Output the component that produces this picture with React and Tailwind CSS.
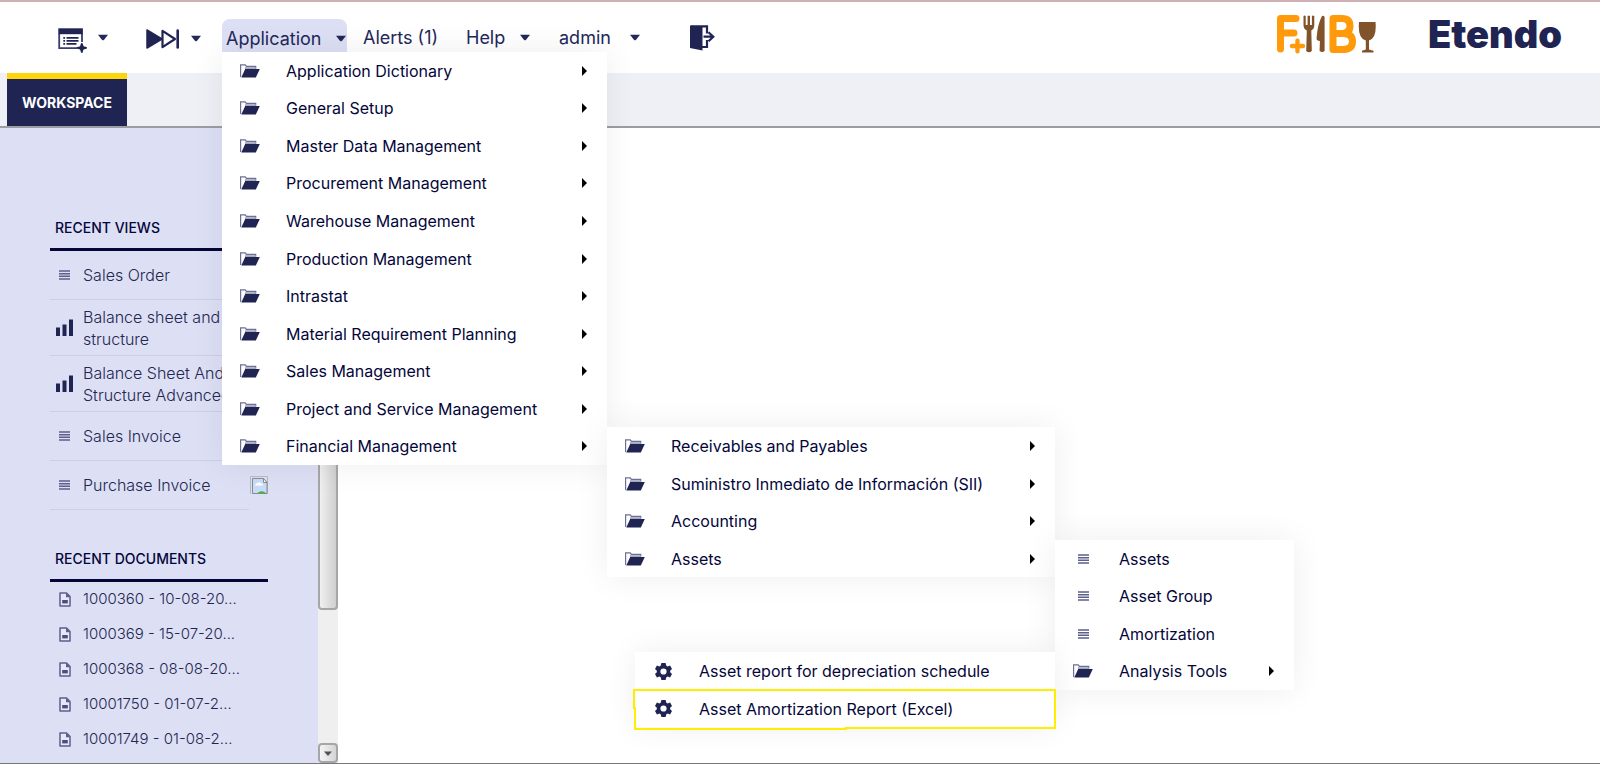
const Caret = ({ className = "" }) => (
  <svg className={className} width="12" height="8" viewBox="0 0 12 8" aria-hidden="true">
    <path d="M1 .8h10L7.3 5.6Q6 7.2 4.7 5.6z" fill="#23285a" />
  </svg>
);

const NewIcon = () => (
  <svg width="29" height="25" viewBox="0 0 29 25" aria-hidden="true">
    <path d="M1.200 6v14.200h18M24 5v9" fill="none" stroke="#3a3e6b" strokeWidth="1.800" />
    <path d="M.3.300h24.600v5.900H.3z" fill="#202452" />
    <path d="M5.300 9.800h1.800M5.300 12.800h1.800M5.300 15.800h1.800M8.500 9.800h12M8.500 12.800h12M8.500 15.800h10" stroke="#202452" strokeWidth="1.800" />
    <path d="M23.800 15.800q.7 2.700 1.300 3.100.6.400 3 .9-2.400.6-3 1-.6.500-1.300 3.200-.7-2.700-1.200-3.200-.6-.4-3.100-1 2.500-.5 3.100-.9.500-.4 1.200-3.100z" fill="#202452" stroke="#202452" strokeWidth="1.800" strokeLinejoin="round" />
  </svg>
);

const ForwardIcon = () => (
  <svg width="34" height="20" viewBox="0 0 34 20" aria-hidden="true">
    <path d="M1 1v18l15-9z" fill="#202452" stroke="#202452" strokeWidth="1.500" strokeLinejoin="round" />
    <path d="M16.500 1.800v16.400L29 10z" fill="none" stroke="#202452" strokeWidth="2.200" strokeLinejoin="round" />
    <path d="M31.700 1.500v17" stroke="#202452" strokeWidth="2.600" strokeLinecap="round" />
  </svg>
);

const ExitIcon = () => (
  <svg width="25" height="26" viewBox="0 0 25 26" aria-hidden="true">
    <path d="M0 .500L12.500 2v23.600L0 23z" fill="#202452" />
    <path d="M1 1.400h16v7M12 22h5v-7" fill="none" stroke="#202452" strokeWidth="2.200" />
    <path d="M13.500 11.700h9M18.500 7.200l4.800 4.500-4.800 4.600" fill="none" stroke="#202452" strokeWidth="2.200" />
  </svg>
);

const FolderIcon = () => (
  <svg width="20" height="14" viewBox="0 0 20 14" aria-hidden="true">
    <path d="M.6 13V.8h4.600l1.200 1.600h9.300v2.400" fill="#fff" stroke="#6d7093" strokeWidth="1.200" />
    <path d="M5 3.200h10.500V6H5z" fill="#a4a6c0" />
    <path d="M5.200 5h14.600l-4 8.600H1.300z" fill="#202452" />
  </svg>
);

const LinesIcon = () => (
  <svg width="11" height="10" viewBox="0 0 11 10" aria-hidden="true">
    <path d="M0 1h11M0 3.700h11M0 6.300h11M0 9h11" stroke="#5c5f8b" strokeWidth="1.600" />
  </svg>
);

const ChartIcon = () => (
  <svg width="17" height="17" viewBox="0 0 17 17" aria-hidden="true">
    <path d="M0 8.500h4V17H0zM6.500 5.500h4V17h-4zM13 .5h4V17h-4z" fill="#202452" />
  </svg>
);

const DocIcon = () => (
  <svg width="12" height="15" viewBox="0 0 12 15" aria-hidden="true">
    <path d="M1 1h6.500L11 4.600V14H1z" fill="#e6e7f8" stroke="#5c5f8b" strokeWidth="1.500" strokeLinejoin="round" />
    <path d="M7 .8v4.400h4.300z" fill="#5c5f8b" />
    <path d="M3.200 8h5.600v3.400H3.200z" fill="#4a4e7d" />
  </svg>
);

const GearIcon = () => (
  <svg width="17" height="17" viewBox="0 0 24 24" aria-hidden="true">
    <path
      fill="#202452"
      fillRule="evenodd"
      d="M9 0h6l.8 3.700 1.900 1.100 3.600-1.200 2.700 5-2.600 2.500v1.800l2.600 2.500-2.700 5-3.600-1.200-1.900 1.100L15 24H9l-.8-3.700-1.900-1.100-3.600 1.200-2.700-5 2.600-2.500v-1.800L0 8.600l2.700-5 3.600 1.200 1.900-1.100zM12 7.600a4.400 4.400 0 1 0 0 8.800 4.400 4.400 0 0 0 0-8.800z"
    />
  </svg>
);

const BrokenImage = () => (
  <svg className="shrink-0" width="18" height="18" viewBox="0 0 18 18" role="img" aria-label="Image not available">
    <path d="M.5 18V.5h17V18" fill="none" stroke="#b9b9c4" />
    <path d="M2.500 17.500v-15h11l3.500 4v11z" fill="#c6dcf8" stroke="#8a8a90" />
    <path d="M5 9.500q0-2.500 2.500-2.300 1.500-2 3.200 0 2.300 0 2.300 2.300z" fill="#fff" />
    <path d="M13.500 2.500v4H17z" fill="#fff" stroke="#8a8a90" />
    <path d="M7 17.500q4.500-4.500 9.500 0z" fill="#4fae33" />
  </svg>
);

const FoodLogo = () => (
  <svg width="100" height="40" viewBox="0 0 100 40" role="img" aria-label="F&B">
    <g fill="none" stroke="#ff9a0a" strokeWidth="7" strokeLinecap="round" strokeLinejoin="round">
      <path d="M20 4.500H4.500V35M5 19h13" />
      <path d="M57 4.500v31h11q8.500-.5 8.500-8 0-7.500-8.500-8H57h9q8-.5 8-7.500 0-7.500-8-7.500z" />
    </g>
    <path d="M14 32h14M21.500 25v14" stroke="#fff" strokeWidth="8" />
    <path d="M16 32h11M21.500 26.800v10.400" stroke="#ff9a0a" strokeWidth="4.400" strokeLinecap="round" />
    <g fill="#80532b">
      <path d="M27.500 2q1.400-1.200 2.200 0v9h1.900V2q1.200-1.200 2.400 0v9h1.900V2q1-1.200 2.400 0v9q0 4-3 5.500l.5 20.500q-2.800 2.500-5.600 0l.6-20.500q-3.300-1.500-3.300-5.500z" />
      <path d="M46 2q2.600-.8 2.600 1.500V37q-2.400 2-5 0l.3-10q-3.800-.5-3.300-3 1-14 5.400-22z" />
      <path d="M83 8h16.500q1.500 16.500-6.500 18.500v9l4.500 1.300v1.700H86v-1.700l3.800-1.300v-9Q81.500 24.500 83 8z" />
    </g>
  </svg>
);

const icons = { folder: FolderIcon, lines: LinesIcon, gear: GearIcon };

const reports = [
  { label: "Asset report for depreciation schedule", icon: "gear" },
  { label: "Asset Amortization Report (Excel)", icon: "gear", marked: true },
];

const assets = [
  { label: "Assets", icon: "lines" },
  { label: "Asset Group", icon: "lines" },
  { label: "Amortization", icon: "lines" },
  { label: "Analysis Tools", icon: "folder", items: reports, place: "right-full top-0 w-[420px] h-[75px]" },
];

const financial = [
  { label: "Receivables and Payables", icon: "folder", arrow: true },
  { label: "Suministro Inmediato de Información (SII)", icon: "folder", arrow: true },
  { label: "Accounting", icon: "folder", arrow: true },
  { label: "Assets", icon: "folder", items: assets, place: "left-full top-0 w-[239px] h-[150px]" },
];

const application = [
  { label: "Application Dictionary", icon: "folder", arrow: true },
  { label: "General Setup", icon: "folder", arrow: true },
  { label: "Master Data Management", icon: "folder", arrow: true },
  { label: "Procurement Management", icon: "folder", arrow: true },
  { label: "Warehouse Management", icon: "folder", arrow: true },
  { label: "Production Management", icon: "folder", arrow: true },
  { label: "Intrastat", icon: "folder", arrow: true },
  { label: "Material Requirement Planning", icon: "folder", arrow: true },
  { label: "Sales Management", icon: "folder", arrow: true },
  { label: "Project and Service Management", icon: "folder", arrow: true },
  { label: "Financial Management", icon: "folder", items: financial, place: "left-full top-0 w-[448px] h-[150px]" },
];

function Menu({ items, place }) {
  return (
    <ul className={`absolute flex flex-col bg-white shadow-[0_0_32px_rgba(0,0,0,0.07)] ${place}`}>
      {items.map(({ label, icon, items: children, place: childPlace, arrow, marked }) => {
        const Icon = icons[icon];
        return (
          <li key={label} className="relative flex flex-1">
            <button
              type="button"
              className="flex flex-1 items-center pr-5 text-left text-base text-[#04063a]"
            >
              <span className="flex w-14 shrink-0 justify-center">
                <Icon />
              </span>
              <span className="flex-1 pl-2 whitespace-nowrap">{label}</span>
              {(arrow || children) && (
                <svg width="5" height="10" viewBox="0 0 5 10" aria-hidden="true">
                  <path d="M0 0l5 5-5 5z" fill="#000" />
                </svg>
              )}
            </button>
            {marked && (
              <svg
                className="pointer-events-none absolute -inset-x-0.5 -inset-y-0.5 h-[42px] w-[424px]"
                viewBox="0 0 424 42"
                fill="none"
                stroke="#ffee00"
                strokeWidth="2"
                aria-hidden="true"
              >
                <path d="M1 20V2h421v38H213v1H2V20z" />
              </svg>
            )}
            {children && <Menu items={children} place={childPlace} />}
          </li>
        );
      })}
    </ul>
  );
}

const views = [
  { label: "Sales Order", Icon: LinesIcon },
  { label: "Balance sheet and structure", Icon: ChartIcon, tall: true },
  { label: "Balance Sheet And Structure Advanced", Icon: ChartIcon, tall: true },
  { label: "Sales Invoice", Icon: LinesIcon },
  { label: "Purchase Invoice", Icon: LinesIcon, broken: true },
];

const documents = [
  "1000360 - 10-08-20...",
  "1000369 - 15-07-20...",
  "1000368 - 08-08-20...",
  "10001750 - 01-07-2...",
  "10001749 - 01-08-2...",
];

export default function App() {
  return (
    <div className="flex h-screen flex-col overflow-hidden border-t-2 border-b border-t-[#cfb0b5] border-b-[#77777b] bg-white font-['Inter','Liberation_Sans',sans-serif]">
      <header className="relative z-10 flex h-[71px] shrink-0 items-start pl-[58px] text-lg text-[#23285a]">
        <button type="button" aria-label="New" className="flex items-start gap-2.5 pt-[26px]">
          <NewIcon />
          <Caret className="mt-1.5" />
        </button>
        <button type="button" aria-label="Quick launch" className="ml-[37px] flex items-start gap-2.5 pt-[27px]">
          <ForwardIcon />
          <Caret className="mt-1.5" />
        </button>
        <div className="relative mt-[17px] ml-5">
          <button
            type="button"
            aria-expanded="true"
            className="flex h-[33px] w-[125px] items-center justify-between rounded-t-lg bg-[#dddff5] pt-1.5 pl-1"
          >
            Application
            <Caret />
          </button>
          <Menu items={application} place="left-0 top-full w-[385px] h-[413px]" />
        </div>
        <button type="button" className="mt-[22px] ml-4 w-[75px] text-left whitespace-nowrap">
          Alerts (1)
        </button>
        <button type="button" className="mt-[22px] ml-7 flex w-[65px] items-center justify-between">
          Help
          <Caret />
        </button>
        <button type="button" className="mt-[22px] ml-7 flex w-[82px] items-center justify-between">
          admin
          <Caret />
        </button>
        <button type="button" aria-label="Log out" className="mt-[23px] ml-[49px]">
          <ExitIcon />
        </button>
        <div className="ml-auto flex items-start gap-[52px] pt-3 pr-[38px]">
          <FoodLogo />
          <span className="text-[38px] leading-10 font-black text-[#202452]">Etendo</span>
        </div>
      </header>

      <nav className="flex h-[55px] shrink-0 border-b-2 border-[#9c9ca3] bg-[#eff0f6] pl-[7px]">
        <button type="button" className="w-[120px] border-t-6 border-[#fdd50d] bg-[#202452] text-sm font-bold text-white">
          WORKSPACE
        </button>
      </nav>

      <div className="flex min-h-0 flex-1">
        <aside className="flex w-[338px] bg-[#dddff5]">
          <div className="flex-1 overflow-hidden pt-[86px] pl-[50px] text-[#23264f]">
            <h2 className="w-[218px] border-b-3 border-[#04063a] pb-1.5 pl-[5px] text-sm leading-7 font-medium text-[#04063a]">
              RECENT VIEWS
            </h2>
            <ul className="w-[199px] text-base font-light">
              {views.map(({ label, Icon, tall, broken }) => (
                <li
                  key={label}
                  className={`flex items-center border-b border-[#cdcfea] ${tall ? "h-14" : "h-[49px]"}`}
                >
                  <a href="#view" className="flex items-center">
                    <span className="flex w-[33px] shrink-0 justify-center pr-1">
                      <Icon />
                    </span>
                    <span className={tall ? "w-[160px] leading-[22px]" : "w-[167px] whitespace-nowrap"}>{label}</span>
                  </a>
                  {broken && <BrokenImage />}
                </li>
              ))}
            </ul>
            <h2 className="mt-[35px] w-[218px] border-b-3 border-[#04063a] pb-1.5 pl-[5px] text-sm leading-7 font-medium text-[#04063a]">
              RECENT DOCUMENTS
            </h2>
            <ul className="text-[15px] font-light">
              {documents.map((name) => (
                <li key={name}>
                  <a href="#document" className="flex h-[35px] items-center whitespace-nowrap">
                    <span className="flex w-[33px] shrink-0 justify-center pr-1">
                      <DocIcon />
                    </span>
                    {name}
                  </a>
                </li>
              ))}
            </ul>
          </div>
          <div className="flex w-5 flex-col justify-between bg-[#efefef]" aria-hidden="true">
            <div className="h-[482px] rounded-b-sm border-2 border-t-0 border-[#a6a6a9] bg-linear-to-r from-[#f0f0f0] to-[#cfcfcf]" />
            <div className="flex h-5 items-center justify-center rounded-sm border-2 border-[#a6a6a9] bg-linear-to-r from-[#f4f4f4] to-[#d4d4d4]">
              <svg width="8" height="5" viewBox="0 0 8 5">
                <path d="M0 .5h8L4 5z" fill="#505055" />
              </svg>
            </div>
          </div>
        </aside>
        <main className="flex-1 bg-white" />
      </div>
    </div>
  );
}
